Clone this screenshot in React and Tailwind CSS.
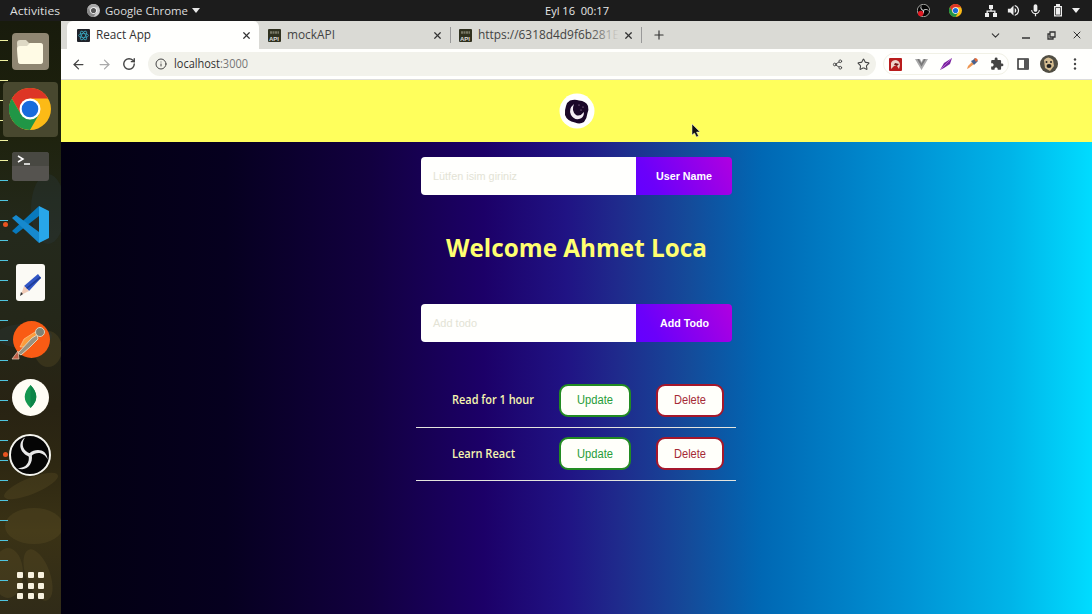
import React from "react";
import { ArrowLeft, ArrowRight, RotateCw, Info, Share2, Star, Plus, X, ChevronDown } from "lucide-react";
import { MdExtension, MdVolumeUp, MdMic } from "react-icons/md";

function Label({ w, size, weight = 400, color, children, h = 20, family = "Open Sans" }) {
  return (
    <svg width={w} height={h} className="block shrink-0 overflow-visible">
      <text x="0" y={h * 0.72} fontSize={size} fontWeight={weight} fill={color} fontFamily={`'${family}', sans-serif`}
        textLength={w} lengthAdjust="spacingAndGlyphs">{children}</text>
    </svg>
  );
}

function ChromeLogo({ size, mono = false }) {
  const c = mono ? ["#aaa", "#888", "#ccc", "#555"] : ["#dd3526", "#209646", "#fcba16", "#186bdc"];
  return (
    <svg width={size} height={size} viewBox="0 0 48 48" className="block">
      <circle cx="24" cy="24" r="24" fill={c[2]} />
      <path d="M24 24 13.6 30 3.2 12A24 24 0 0 1 44.8 12H24Z" fill={c[0]} />
      <path d="M3.2 12 13.6 30 24 36 34.4 30 24 48A24 24 0 0 1 3.2 12Z" fill={c[1]} />
      <circle cx="24" cy="24" r="12" fill="#fff" />
      <circle cx="24" cy="24" r="9.5" fill={c[3]} />
    </svg>
  );
}

function ObsLogo({ size, dot = false }) {
  return (
    <svg width={size} height={size} viewBox="0 0 42 42" className="block">
      <circle cx="21" cy="21" r="20" fill="#050505" stroke="#f5f5ef" strokeWidth="2" />
      <g fill="#e8e8e8">
        {[0, 120, 240].map((a) => (
          <path key={a} transform={`rotate(${a} 21 21)`} d="M20 22.500C11 19 8 9 16 3.500 11.500 10 14 17.500 21.500 19.500Z" />
        ))}
      </g>
      {dot && <circle cx="12" cy="31" r="9" fill="#e01b24" />}
    </svg>
  );
}

function TopBar() {
  return (
    <div className="grid h-[21px] w-full shrink-0 grid-cols-[1fr_auto_1fr] items-center bg-[#1c1c1c]">
      <div className="flex items-center pl-[10px]">
        <Label w={50} size={11.5} color="#dedede">Activities</Label>
        <div className="ml-[27px]"><ChromeLogo size={13} mono /></div>
        <div className="ml-[5px]"><Label w={83} size={11.5} color="#dedede">Google Chrome</Label></div>
        <svg width="8" height="5" className="ml-[4px]"><path d="M0 0h8L4 5z" fill="#e8e8e8" /></svg>
      </div>
      <div className="-mr-[31px] ml-[31px]"><Label w={64} size={11.5} weight={500} color="#e8e8e8">Eyl 16&#160; 00:17</Label></div>
      <div className="flex items-center justify-end pr-[12px] text-[#eee]">
        <ObsLogo size={13} dot />
        <div className="ml-[19px]"><ChromeLogo size={13} /></div>
        <svg width="12" height="12" viewBox="0 0 12 12" className="ml-[23px]" fill="#eee">
          <path d="M4 0h4v4H6.600v1.500H10.500V8H12v4H8V8h1.200V6.800H2.800V8H4v4H0V8h1.500V5.500h3.900V4H4z" />
        </svg>
        <MdVolumeUp size={15} className="ml-[9px]" />
        <MdMic size={15} className="ml-[7px]" />
        <svg width="10" height="13" viewBox="0 0 10 13" className="ml-[10px]"><path d="M3 0h4v2h2v10.500H1V2h2z" fill="#eee" /><path d="M2.500 3.500h5v7.500h-5z" fill="none" stroke="#333" strokeWidth=".8" /></svg>
        <svg width="8" height="5" className="ml-[9px]"><path d="M0 0h8L4 5z" fill="#eee" /></svg>
      </div>
    </div>
  );
}

function DockItem({ children, active, dot }) {
  return (
    <div className="flex h-[57.6px] w-[61px] shrink-0 items-center">
      <div className="flex w-[3px] justify-start">{dot && <i className="ml-[3px] size-[5px] shrink-0 rounded-full bg-[#e95420]" />}</div>
      <div className={active ? "flex h-[55px] w-[55px] items-center justify-center rounded-[4px] bg-[#48482f] pr-[1px]" : "flex h-[55px] w-[55px] items-center justify-center pr-[1px]"}>{children}</div>
    </div>
  );
}

function Dock() {
  return (
    <aside className="relative h-[593px] w-[61px] shrink-0 overflow-hidden bg-[linear-gradient(180deg,#181b0c_0%,#1e220d_18%,#24291c_36%,#242719_50%,#282313_65%,#2e2812_75%,#3a3215_86%,#302b18_100%)]">
      <svg width="61" height="593" className="absolute inset-0">
        <g fill="#66572a" opacity=".28">
          <ellipse cx="48" cy="328" rx="14" ry="18" />
          <ellipse cx="31" cy="465" rx="29" ry="8" transform="rotate(-22 31 465)" />
          <ellipse cx="34" cy="505" rx="29" ry="18" />
          <ellipse cx="8" cy="552" rx="15" ry="25" />
          <ellipse cx="38" cy="554" rx="12" ry="27" transform="rotate(-20 38 554)" />
        </g>
        <g fill="#2c3b43" opacity=".3"><ellipse cx="48" cy="188" rx="17" ry="35" /><ellipse cx="24" cy="315" rx="28" ry="12" /></g>
        {Array.from({ length: 29 }, (_, i) => <path key={i} d={`M0 ${19.5 + i * 20}H8`} stroke={i < 7 ? "#eef0a0" : "#4fc5df"} strokeWidth="1" />)}
      </svg>
      <div className="relative flex h-full flex-col pt-[2px]">
        <DockItem>
          <svg width="37" height="37" viewBox="0 0 37 37"><rect width="37" height="37" rx="4" fill="#8f8672" /><path d="M5 10q0-3 3-3h6l3 3h11q3 0 3 3v15q0 3-3 3H9q-3 0-3-3z" fill="#ded9c5" /><path d="M5 16q0-3 3-3h7l3-3h10q3 0 3 3v15q0 3-3 3H9q-3 0-3-3z" fill="#fffbe5" /></svg>
        </DockItem>
        <DockItem active dot><ChromeLogo size={42} /></DockItem>
        <DockItem>
          <svg width="37" height="29" viewBox="0 0 37 29"><rect width="37" height="29" rx="3" fill="#55534f" /><path d="M0 14V3q0-3 3-3h31q3 0 3 3v11z" fill="#484842" /><path d="m6 4 5 3-5 3M12 12h6" stroke="#fff" strokeWidth="1.500" fill="none" /></svg>
        </DockItem>
        <DockItem dot>
          <svg width="37" height="37" viewBox="0 0 37 37"><path d="M0 25 27 0V10L4 28z" fill="#0879bd" /><path d="M0 12 4 9 27 26v11z" fill="#1689ce" /><path d="m27 0 10 5v27l-10 5z" fill="#28a6e9" /></svg>
        </DockItem>
        <DockItem>
          <svg width="29" height="37" viewBox="0 0 29 37"><rect width="29" height="37" rx="3" fill="#fbfaf5" /><path d="m8 22 14-12 3 4-12 13z" fill="#3156c5" /><path d="m11 25 14-11-1-1.500L10 24z" fill="#1d3c96" /><path d="m8 22 5 5-8 4z" fill="#efcab6" /><path d="m5 28-1 4 3-2z" fill="#333" /></svg>
        </DockItem>
        <DockItem>
          <svg width="37" height="40" viewBox="0 0 37 40" className="overflow-visible">
            <circle cx="19.500" cy="19.500" r="18.500" fill="#f95b14" />
            <path d="m8 27 4-8 11-7 3 4-12 11z" fill="#fb9c3c" stroke="#ffd2a0" strokeWidth=".6" />
            <path d="m6 33 14-15 5-3 1 4-8 8-9 8z" fill="#99917f" stroke="#ded4bb" strokeWidth="1" />
            <circle cx="28" cy="12" r="4.500" fill="#7f8274" stroke="#ded4bb" strokeWidth="1" />
            <path d="m0 39 6-8 1 8z" fill="#c16048" stroke="#ead2bb" strokeWidth=".7" />
          </svg>
        </DockItem>
        <DockItem>
          <svg width="37" height="37" viewBox="0 0 37 37"><circle cx="18.500" cy="18.500" r="18.500" fill="#fffdf5" /><path d="M18.500 6Q30 18 18.500 29Q7 18 18.500 6z" fill="#159750" /><path d="M18.500 6Q30 18 18.500 29z" fill="#0c8446" /></svg>
        </DockItem>
        <DockItem dot><ObsLogo size={42} /></DockItem>
        <div className="mt-auto grid w-[61px] grid-cols-[6px_6px_6px] justify-center gap-[4.500px] pb-[15px]">
          {Array.from({ length: 9 }, (_, i) => <i key={i} className="size-[6px] rounded-[1px] bg-[#f8f2df]" />)}
        </div>
      </div>
    </aside>
  );
}

function ApiIcon() {
  return <svg width="13" height="13"><rect width="13" height="13" rx="1" fill="#30311f" /><path d="M2 3.500h9" stroke="#777765" strokeWidth="2.500" strokeDasharray="2 .5" /><text x="1" y="11.500" fontSize="6" fill="#ddd" fontWeight="700" fontFamily="Liberation Sans">API</text></svg>;
}

function Tabs() {
  return (
    <div className="flex h-[28px] shrink-0 items-center bg-[#dadad5] text-[#333]">
      <div className="h-full w-[6px]" />
      <div className="flex h-full w-[192px] items-center rounded-t-[6px] bg-[#fffffd] pl-[10px]">
        <svg width="13" height="13" viewBox="0 0 13 13"><rect width="13" height="13" rx="1" fill="#20232a" /><g fill="none" stroke="#3cb4ce" strokeWidth=".7"><ellipse cx="6.500" cy="6.500" rx="5" ry="2" /><ellipse cx="6.500" cy="6.500" rx="5" ry="2" transform="rotate(60 6.500 6.500)" /><ellipse cx="6.500" cy="6.500" rx="5" ry="2" transform="rotate(120 6.500 6.500)" /></g></svg>
        <div className="ml-[6px]"><Label w={55} size={11.7} color="#333">React App</Label></div>
        <X size={11} className="ml-auto mr-[7px]" strokeWidth={2.6} />
      </div>
      <div className="flex h-full w-[191px] items-center pl-[9px]"><ApiIcon /><div className="ml-[6px]"><Label w={48} size={11.7} color="#444">mockAPI</Label></div><X size={11} className="ml-auto mr-[7px]" strokeWidth={2.6} /></div>
      <i className="h-[16px] w-px bg-[#999]" />
      <div className="flex h-full w-[190px] items-center pl-[8px]"><ApiIcon />
        <div className="relative ml-[6px]"><Label w={141} size={11.7} color="#444">https://6318d4d9f6b281E</Label><div className="absolute inset-y-0 right-0 w-[30px] bg-linear-to-r from-transparent to-[#dadad5]" /></div>
        <X size={11} className="ml-auto mr-[7px]" strokeWidth={2.6} />
      </div>
      <i className="h-[16px] w-px bg-[#999]" />
      <Plus size={14} className="ml-[10px]" />
      <div className="ml-auto flex items-center pr-[9px]">
        <ChevronDown size={13} />
        <svg width="8" height="8" className="ml-[20px]"><path d="M0 7h8" stroke="#333" strokeWidth="1.500" /></svg>
        <svg width="9" height="9" viewBox="0 0 9 9" className="ml-[17px]"><path d="M3 1h5v5H3zM3 3H1v5h5V6" fill="none" stroke="#333" strokeWidth="1.300" /></svg>
        <X size={12} className="ml-[15px]" />
      </div>
    </div>
  );
}

function Toolbar() {
  return (
    <div className="flex h-[31px] shrink-0 items-center border-b border-[#ddd] bg-[#fffffd] pl-[10px] text-[#444]">
      <ArrowLeft size={15} /><ArrowRight size={15} className="ml-[11px] text-[#aaa]" /><RotateCw size={14} strokeWidth={2.400} className="ml-[10px]" />
      <div className="ml-[12px] flex h-[24px] w-[728px] items-center rounded-full bg-[#f2f2eb] pl-[7px]">
        <Info size={12} />
        <div className="ml-[7px]"><Label w={74} size={11.7} color="#333">localhost<tspan fill="#777">:3000</tspan></Label></div>
        <Share2 size={11} className="ml-auto" /><Star size={13} className="ml-[14px] mr-[6px]" />
      </div>
      <div className="ml-[7px] flex h-[22px] items-center rounded-full border border-[#f1f1e6] pl-[5px] pr-[4px]">
        <svg width="13" height="13"><rect width="13" height="13" rx="1" fill="#b91c1c" /><path d="M2 5q1-3 5-3 4 1 4 5l-1 4-2-3H5l-3 3z" fill="#eed4c9" /><path d="m6 5 4 1-2 2-3-1z" fill="#711" /></svg>
        <svg width="13" height="11" viewBox="0 0 13 11" className="ml-[13px]"><path d="M0 0h5l1.500 3L8 0h5L6.500 11z" fill="#aaa" /><path d="m3 0 3.500 6L10 0" fill="none" stroke="#777" strokeWidth="1.500" /></svg>
        <svg width="13" height="13" viewBox="0 0 13 13" className="ml-[12px]"><path d="m0 12 4-7 8-5-2 6-6 4z" fill="#7b24a1" /><path d="m1 11 10-10" stroke="#d58be0" strokeWidth=".6" /></svg>
        <svg width="12" height="12" viewBox="0 0 12 12" className="ml-[13px]"><path d="m1 11 1-3 4-4 2 2-5 4z" fill="#ee9652" /><path d="m5 3 2-1 2-2 3 3-3 3-1 1z" fill="#48608b" /><path d="m8 1 2-1 2 2-2 2z" fill="#e46a36" /></svg>
        <MdExtension size={14} className="ml-[12px]" />
      </div>
      <svg width="12" height="12" viewBox="0 0 12 12" className="ml-[8px]"><path d="M1 1h10v10H1z" fill="none" stroke="#333" strokeWidth="1.500" /><path d="M7 1h5v10H7z" fill="#555" /></svg>
      <svg width="18" height="18" viewBox="0 0 18 18" className="ml-[11px]"><circle cx="9" cy="9" r="9" fill="#514e43" /><path d="M4 5q4-5 9 0l1 6-4 5-5-3z" fill="#d5bd91" /><circle cx="6.500" cy="7" r="1" fill="#222" /><circle cx="11" cy="7" r="1" fill="#222" /><ellipse cx="9" cy="11" rx="2.500" ry="2" fill="#222" /></svg>
      <svg width="4" height="12" viewBox="0 0 4 12" className="ml-[15px]" fill="#444"><circle cx="2" cy="1.500" r="1.200" /><circle cx="2" cy="6" r="1.200" /><circle cx="2" cy="10.500" r="1.200" /></svg>
    </div>
  );
}

function Field({ hint, button, hintWidth, buttonWidth }) {
  return (
    <div className="flex h-[38px] w-[311px] overflow-hidden rounded-[4px]">
      <div className="flex w-[215px] items-center bg-[#fffffd] pl-[12px]"><Label w={hintWidth} size={10.7} color="#e3e3d5" family="Liberation Sans">{hint}</Label></div>
      <button className="flex flex-1 items-center justify-center bg-[linear-gradient(60deg,#6300ff_0%,#6b00fa_20%,#b000e0_100%)]"><Label w={buttonWidth} size={10.7} weight={700} color="#fff" family="Liberation Sans">{button}</Label></button>
    </div>
  );
}

function Todo({ text, width }) {
  return (
    <div className="flex h-[53.5px] w-[320px] items-center border-b border-[#e4e4de] pl-[36px]">
      <div className="w-[107px]"><Label w={width} size={11.7} weight={600} color="#f6f6b0">{text}</Label></div>
      <button className="flex h-[33px] w-[72px] items-center justify-center rounded-[9px] border-2 border-[#228b22] bg-[#fffffa]"><Label w={36} size={12} color="#279c38" family="Liberation Sans">Update</Label></button>
      <button className="ml-[25px] flex h-[33px] w-[68px] items-center justify-center rounded-[9px] border-2 border-[#a5172b] bg-[#fffffa]"><Label w={32} size={12} color="#a52a35" family="Liberation Sans">Delete</Label></button>
    </div>
  );
}

export default function App() {
  return (
    <div className="h-[614px] w-[1092px] overflow-hidden font-['Open_Sans',sans-serif]">
      <TopBar />
      <div className="flex">
        <Dock />
        <div className="flex h-[593px] w-[1031px] flex-col">
          <Tabs /><Toolbar />
          <header className="relative flex h-[61.5px] shrink-0 items-center justify-center bg-[#ffff5c]">
            <svg width="36" height="36" viewBox="0 0 36 36">
              <circle cx="18" cy="18" r="17.500" fill="#fff" />
              <path d="M11 7.500Q16 6 20 7.500 27 8 29 13q1 4-.5 7-.5 5-3.500 9-4 2.500-9 .5Q8 28 6 22q-.5-5 1-9 1-4 4-5.500Z" fill="#1b0829" />
              <path d="M15 11q-6 5-3 11 3 5 8 4 5-1 5-7-4 5-8 3-5-4-2-11Z" fill="#f4edf4" />
              <g fill="#d7b5d7"><circle cx="20" cy="12" r=".5" /><circle cx="24" cy="14" r=".5" /><circle cx="22" cy="17" r=".5" /></g>
            </svg>
            <svg width="10" height="15" viewBox="0 0 10 15" className="absolute left-[630px] top-[44px]"><path d="M1 0v11l2.500-2 2 4 2-1-2-4H9z" fill="#111" stroke="#eee" strokeWidth=".5" /></svg>
          </header>
          <main className="flex flex-1 flex-col items-center bg-[linear-gradient(90deg,#020010_0%,#06001f_16%,#120040_30%,#1c0068_41%,#201384_49%,#1f2a8c_54%,#144b9a_61%,#0068b4_68%,#0092d4_82%,#00b4e8_92%,#00dcff_100%)] pt-[15px]">
            <Field hint="Lütfen isim giriniz" button="User Name" hintWidth={84} buttonWidth={56} />
            <h1 className="mt-[39px] flex h-[32px] items-center"><Label w={261} size={25.7} h={32} weight={700} color="#ffff70">Welcome Ahmet Loca</Label></h1>
            <div className="mt-[38px]"><Field hint="Add todo" button="Add Todo" hintWidth={44} buttonWidth={49} /></div>
            <div className="mr-[1px] mt-[32.5px]"><Todo text="Read for 1 hour" width={82} /><Todo text="Learn React" width={63} /></div>
          </main>
        </div>
      </div>
    </div>
  );
}
